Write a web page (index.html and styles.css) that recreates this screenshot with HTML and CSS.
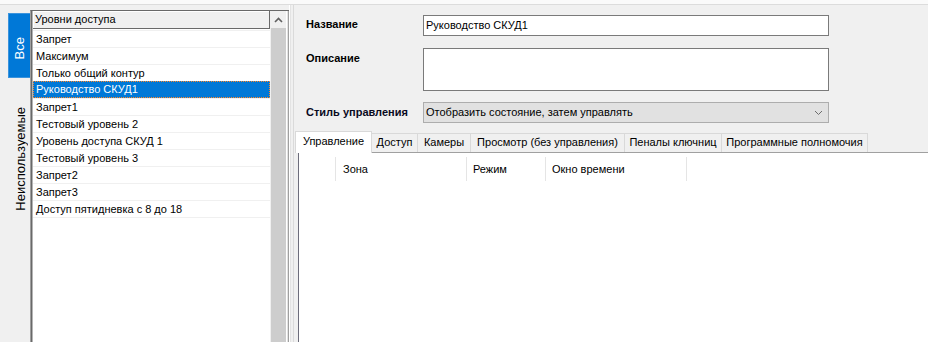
FILE: index.html
```html
<!DOCTYPE html>
<html lang="ru">
<head>
<meta charset="utf-8">
<title>Уровни доступа</title>
<link rel="stylesheet" href="styles.css">
</head>
<body>
<div class="topbar"></div>
<div class="main">
  <div class="sidetabs">
    <div class="vtab active"><span>Все</span></div>
    <div class="vtab idle"><span>Неиспользуемые</span></div>
  </div>
  <div class="listbox">
    <div class="list">
      <div class="lhead">Уровни доступа</div>
      <div class="row">Запрет</div>
      <div class="row">Максимум</div>
      <div class="row">Только общий контур</div>
      <div class="row sel">Руководство СКУД1</div>
      <div class="row">Запрет1</div>
      <div class="row">Тестовый уровень 2</div>
      <div class="row">Уровень доступа СКУД 1</div>
      <div class="row">Тестовый уровень 3</div>
      <div class="row">Запрет2</div>
      <div class="row">Запрет3</div>
      <div class="row last">Доступ пятидневка с 8 до 18</div>
    </div>
    <div class="vscroll">
      <div class="sbtn"><svg width="9" height="6" viewBox="0 0 9 6"><path d="M1 5 L4.5 1.5 L8 5" stroke="#606060" stroke-width="1.6" fill="none"/></svg></div>
      <div class="thumb"></div>
    </div>
    <div class="lbedge"></div>
  </div>
  <div class="splitter"></div>
  <div class="right">
    <div class="form">
      <div class="lbl l1">Название</div>
      <div class="edit">Руководство СКУД1</div>
      <div class="lbl l2">Описание</div>
      <div class="memo"></div>
      <div class="lbl l3">Стиль управления</div>
      <div class="combo"><span>Отобразить состояние, затем управлять</span><svg width="9" height="6" viewBox="0 0 9 6"><path d="M1 1 L4.5 4.5 L8 1" stroke="#6d6d6d" stroke-width="1" fill="none"/></svg></div>
    </div>
    <div class="tabs">
      <div class="tab selected w1">Управление</div>
      <div class="tab w2">Доступ</div>
      <div class="tab w3">Камеры</div>
      <div class="tab w4">Просмотр (без управления)</div>
      <div class="tab w5">Пеналы ключниц</div>
      <div class="tab w6">Программные полномочия</div>
    </div>
    <div class="tabpage">
      <div class="ghead">
        <div class="gc c0"></div>
        <div class="gc c1">Зона</div>
        <div class="gc c2">Режим</div>
        <div class="gc c3">Окно времени</div>
      </div>
    </div>
  </div>
</div>
</body>
</html>
```
FILE: styles.css
```css
* { box-sizing: border-box; }
html, body { margin: 0; padding: 0; }
body {
  width: 928px;
  height: 342px;
  overflow: hidden;
  background: #f0f0f0;
  font-family: "Liberation Sans", Arial, sans-serif;
  font-size: 11px;
  color: #000;
}
.topbar {
  height: 5px;
  background: #fafafa;
  border-bottom: 1px solid #dcdcdc;
}
.main {
  display: flex;
  height: 337px;
}

/* vertical side tabs */
.sidetabs {
  width: 30px;
  flex: none;
  display: flex;
  flex-direction: column;
  padding-top: 8px;
  padding-left: 8px;
}
.vtab {
  width: 22px;
  display: flex;
  align-items: center;
  justify-content: center;
  font-size: 13px;
}
.vtab span {
  writing-mode: vertical-rl;
  transform: rotate(180deg);
}
.vtab.active {
  height: 65px;
  background: #0078d7;
  color: #fff;
  border: 1px solid #3a93dd;
  border-right: none;
  padding-top: 6px;
}
.vtab.idle {
  height: 158px;
  margin-top: 2px;
  padding-left: 3px;
  color: #000;
}

/* list box */
.listbox {
  width: 259px;
  flex: none;
  margin-top: 5px;
  height: 340px;
  display: flex;
  background: #fff;
  border-left: 1px solid #a0a0a0;
  border-top: 1px solid #696969;
  box-shadow: inset 1px 0 0 #696969, inset 2px 0 0 #b4b4b4;
  padding-left: 2px;
}
.list {
  width: 237px;
  flex: none;
  display: flex;
  flex-direction: column;
}
.lhead {
  height: 18px;
  background: #f0f0f0;
  border-right: 1px solid #696969;
  border-bottom: 1px solid #696969;
  box-shadow: inset 1px 1px 0 #fff;
  padding-left: 2px;
  line-height: 17px;
  margin-bottom: 1px;
  white-space: nowrap;
}
.row {
  height: 17px;
  border-top: 1px solid #f0f0f0;
  padding-left: 3px;
  line-height: 16px;
  white-space: nowrap;
}
.row.last { border-bottom: 1px solid #f0f0f0; height: 18px; }
.row.sel {
  background: #0078d7;
  color: #fff;
  border: 1px dotted #ff8728;
  padding-left: 2px;
  line-height: 15px;
}
.vscroll {
  width: 16px;
  flex: none;
  display: flex;
  flex-direction: column;
  background: #f0f0f0;
}
.sbtn {
  height: 17px;
  display: flex;
  align-items: center;
  justify-content: center;
}
.thumb {
  flex: 1;
  background: #cdcdcd;
  margin-left: 1px;
}
.lbedge {
  width: 3px;
  flex: none;
  background: linear-gradient(to right, #fff 0 1px, #e3e3e3 1px 2px, #a0a0a0 2px 3px);
}
.splitter {
  width: 4px;
  flex: none;
  background: linear-gradient(to right, #fff 0 1px, #e3e3e3 1px 2px, #f0f0f0 2px 4px);
}

/* right panel */
.right {
  flex: 1;
  min-width: 0;
  display: flex;
  flex-direction: column;
  border-left: 1px solid #dadada;
}
.form {
  display: grid;
  grid-template-columns: 117px 406px;
  padding: 10px 0 0 12px;
}
.lbl {
  font-weight: bold;
  line-height: 14px;
  white-space: nowrap;
}
.l1 { padding-top: 2px; }
.l2 { padding-top: 3px; margin-top: 12px; }
.l3 { padding-top: 3px; margin-top: 11px; color: #0a0a1e; }
.edit {
  height: 21px;
  background: #fff;
  border: 1px solid #7a7a7a;
  padding-left: 2px;
  line-height: 19px;
  white-space: nowrap;
}
.memo {
  height: 43px;
  margin-top: 12px;
  background: #fff;
  border: 1px solid #7a7a7a;
}
.combo {
  height: 21px;
  margin-top: 11px;
  background: #e1e1e1;
  border: 1px solid #adadad;
  padding: 0 5px 0 2px;
  line-height: 19px;
  display: flex;
  align-items: center;
  justify-content: space-between;
  white-space: nowrap;
}

/* tabs */
.tabs {
  display: flex;
  align-items: flex-end;
  height: 21px;
  margin-top: 8px;
  margin-left: 1px;
  position: relative;
  z-index: 1;
}
.tab {
  height: 19px;
  border: 1px solid #d9d9d9;
  border-bottom: none;
  background: #f0f0f0;
  line-height: 17px;
  text-align: center;
  white-space: nowrap;
  margin-left: -1px;
}
.tab.selected {
  height: 22px;
  margin-bottom: -1px;
  margin-left: 0;
  background: #fff;
  padding-top: 1px;
  position: relative;
  z-index: 2;
}
.w1 { width: 77px; }
.w2 { width: 47px; }
.w3 { width: 54px; }
.w4 { width: 155px; }
.w5 { width: 98px; }
.w6 { width: 147px; }
.tabpage {
  flex: 1;
  margin-left: 4px;
  background: #fff;
  border-top: 1px solid #a0a0a0;
  border-left: 1px solid #6d6d7b;
  padding-top: 4px;
}
.ghead {
  display: flex;
  height: 24px;
}
.gc {
  height: 24px;
  border-right: 1px solid #e5e5e5;
  line-height: 24px;
  padding-left: 6px;
  white-space: nowrap;
}
.c0 { width: 37px; }
.c1 { width: 131px; padding-left: 7px; }
.c2 { width: 79px; }
.c3 { width: 141px; }
```
